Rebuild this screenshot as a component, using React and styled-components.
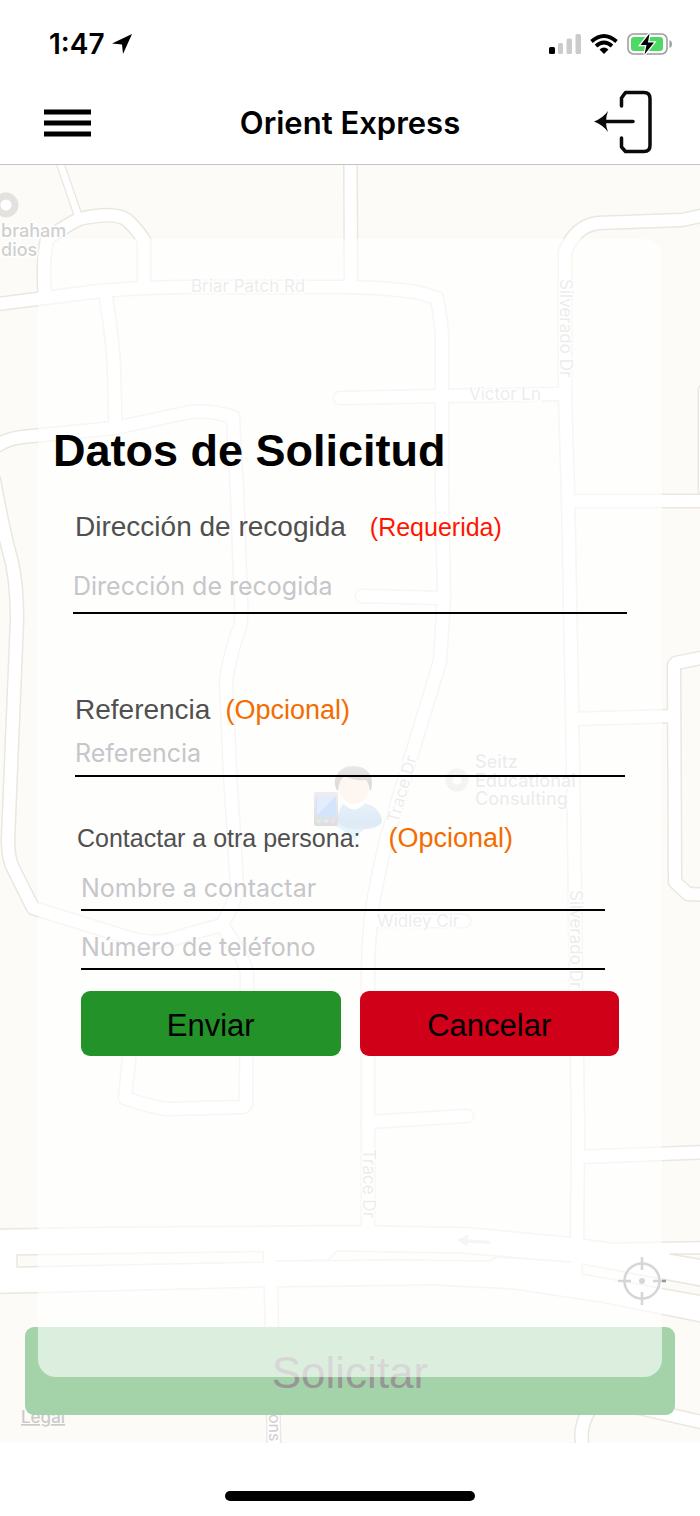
import { useState } from "react";
import styled, { createGlobalStyle } from "styled-components";


const GlobalStyle = createGlobalStyle`
    * {
        box-sizing: border-box;
    }

    body {
        margin: 0;
        background: #ffffff;
        font-family: "Liberation Sans", Arial, sans-serif;
    }
`;

const Screen = styled.div`
    display: flex;
    flex-direction: column;
    min-height: 100vh;
    background: #ffffff;
`;

const StatusBar = styled.div`
    display: flex;
    justify-content: space-between;
    align-items: center;
    height: 84px;
    padding: 4px 27px 0 49px;
`;

const Clock = styled.div`
    display: flex;
    align-items: center;
    gap: 7px;
    font-family: Inter, sans-serif;
    font-size: 28px;
    font-weight: 600;
    color: #000000;
`;

const Signals = styled.div`
    display: flex;
    align-items: center;
    gap: 9px;
`;

const NavBar = styled.header`
    display: grid;
    grid-template-columns: 1fr auto 1fr;
    align-items: center;
    height: 81px;
    padding: 0 44px 2px;
    border-bottom: 1px solid #c4c4c6;
`;

const NavTitle = styled.h1`
    margin: 0;
    font-family: Inter, sans-serif;
    font-size: 31px;
    font-weight: 600;
    line-height: 40px;
    color: #000000;
`;

const IconButton = styled.button`
    display: flex;
    justify-self: ${(props) => props.$side};
    padding: 0;
    border: none;
    background: none;
    cursor: pointer;
`;

const MapArea = styled.main`
    display: grid;
    position: relative;
    overflow: hidden;
    background: #fcfbf7;
`;

const MapDrawing = styled.svg`
    position: absolute;
    top: 0;
    left: 0;
    width: 100%;
    height: 100%;
`;

const Controls = styled.div`
    grid-area: 1 / 1;
    position: relative;
    display: flex;
    flex-direction: column;
    justify-content: flex-end;
    padding: 0 25px 28px;
`;

const LocateButton = styled(IconButton)`
    align-self: flex-end;
    margin: 0 9px 22px 0;
`;

const RequestButton = styled.button`
    height: 88px;
    padding: 4px 0 0;
    border: none;
    border-radius: 9px;
    background: #a5d3a9;
    font-family: inherit;
    font-size: 44px;
    color: #979797;
    cursor: pointer;
`;

const Card = styled.form`
    grid-area: 1 / 1;
    position: relative;
    display: flex;
    flex-direction: column;
    margin: 74px 38px 66px;
    padding: 182px 15px 321px;
    border-radius: 18px;
    background: rgba(255, 255, 255, 0.61);
    pointer-events: none;

    & input, & button, & label {
        pointer-events: auto;
    }
`;

const CardTitle = styled.h2`
    margin: 0;
    font-size: 45px;
    font-weight: bold;
    line-height: 60px;
    color: #000000;
`;

const Section = styled.section`
    display: flex;
    flex-direction: column;
    padding: 0 ${(props) => props.$right}px 0 ${(props) => props.$left}px;
    margin-top: ${(props) => props.$top}px;
`;

const LabelRow = styled.div`
    display: flex;
    align-items: center;
    gap: ${(props) => props.$gap}px;
    height: 36px;
    padding-left: ${(props) => (props.$inset ? 2 : 0)}px;
`;

const Label = styled.label`
    font-size: ${(props) => (props.$small ? 25 : 28)}px;
    color: #505050;
`;

const Note = styled.span`
    font-size: ${(props) => (props.$required ? 25 : 27)}px;
    color: ${(props) => (props.$required ? "#ff1600" : "#f26c00")};
`;

const Input = styled.input`
    width: 100%;
    height: ${(props) => props.$height}px;
    padding: ${(props) => props.$drop}px 0 0;
    border: none;
    border-bottom: 2px solid #000000;
    border-radius: 0;
    background: none;
    font-family: Inter, sans-serif;
    font-size: 25px;
    color: #222222;
    outline: none;

    &::placeholder {
        color: #c6c6cb;
        opacity: 1;
    }
`;

const Actions = styled.div`
    display: grid;
    grid-template-columns: 1fr 1fr;
    gap: 19px;
    margin: 21px 28px 0;
`;

const ActionButton = styled.button`
    height: 65px;
    padding: 4px 0 0;
    border: none;
    border-radius: 9px;
    background: ${(props) => (props.$danger ? "#d00018" : "#229229")};
    font-family: inherit;
    font-size: 31px;
    color: #000000;
    cursor: pointer;
`;

const BottomBar = styled.footer`
    display: flex;
    justify-content: center;
    padding: 48px 0 15px;
`;

const HomeIndicator = styled.div`
    width: 250px;
    height: 10px;
    border-radius: 5px;
    background: #000000;
`;


const roads = [
    "M350.5 160 L351 287",
    "M-10 305 L37 299 L100 291 Q145 287 190 287 L350 287 Q390 288 417 292 L437 298 Q441 320 442 335 L442 490 L444 598 L440 661 L410 760 L387 837 Q374 890 371 920 Q368 945 368 970 L368 1235",
    "M45 297 Q42 265 47 239 Q60 229 79 219 Q115 211 127 220 Q135 227 144 240 L144 288",
    "M105 291 Q113 340 114 370 L115.5 427",
    "M-6 448 Q5 439 22 437 L115 428 L190 412 Q210 410 233 417 L234 440 L237 490 L240.5 590 Q243 625 238 632 Q230 655 226 680 L230 773 L234 836 L237 887 Q236 900 222 925",
    "M-6 480 Q3 530 10 555 Q17 580 17 620 L8 840 Q8 860 14 870 L33 908 L133 939 Q158 946 185 935 L222 925",
    "M222 925 Q246 960 247 975 L246 1104 L243 1107 L167 1109 Q150 1107 125 1098 L131 1040 L131 1010",
    "M340 398 L442 396 L565 394",
    "M710 214 L682 220 L598 223 Q575 226 565 252 L565 394 L568 493 L572 707 L574 823 L576 987 L578 1130 L577 1245",
    "M362 596 L442 598",
    "M568 501 L710 501",
    "M572 719 L674 716",
    "M710 656 L676 663 L674 665 L675 882 L688 894 L710 895",
    "M705 390 L705 490",
    "M370 921 L464 921",
    "M368 1122 L467 1116",
    "M578 1157 L710 1152",
    "M271 1283 L274 1450",
    "M582 1450 L581.5 1433 Q584 1411 600 1399 L710 1424",
];

const Roads = () => (
    <g fill="none" strokeLinejoin="round" strokeLinecap="round">
        <g stroke="#ebe7e0" strokeWidth="15">
            {roads.map((d) => <path key={d} d={d} />)}
            <path d="M59 160 L79 218" strokeWidth="9" />
        </g>
        <path
            d="M-5 1229 L120 1227 L360 1225.5 L467 1227.5 L570 1237 L612 1243 L705 1241.5 V1323 L600 1302 L513 1289 L433 1285 L264 1287 L-5 1293.5 Z"
            fill="#ffffff"
            stroke="#ebe7e0"
            strokeWidth="1.5"
        />
        <g stroke="#ffffff" strokeWidth="12">
            {roads.map((d) => <path key={d} d={d} />)}
            <path d="M59 160 L79 218" strokeWidth="6.5" />
        </g>
        <g fill="#fcfbf7" stroke="#ebe7e0" strokeWidth="1.5">
            <path d="M17 1255 L263.5 1251.5 V1262 L17 1267 Z" />
            <path d="M276 1261 L328 1260 L337 1251 L460 1253 L570 1262 L497 1257 L489 1261 L400 1260 Z" />
            <path d="M582 1264 L710 1288 V1297 L582 1274 Z" />
            <path d="M670 1254 H710 V1261 Z" />
        </g>
    </g>
);

const MapLabels = () => (
    <g
        fontFamily="Inter, sans-serif"
        fontSize="17"
        fill="#cfcfcf"
        stroke="#ffffff"
        strokeWidth="3"
        paintOrder="stroke"
    >
        <g fontSize="18" fontWeight="500">
            <text x="1" y="237">braham</text>
            <text x="1" y="256">dios</text>
            <text x="475" y="768">Seitz</text>
            <text x="475" y="787">Educational</text>
            <text x="475" y="805">Consulting</text>
        </g>
        <text x="191" y="292">Briar Patch Rd</text>
        <text x="469" y="400">Victor Ln</text>
        <text x="377" y="927">Widley Cir</text>
        <text transform="translate(560 279) rotate(90)">Silverado Dr</text>
        <text transform="translate(570 890) rotate(90)">Silverado Dr</text>
        <text transform="translate(363 1149) rotate(90)">Trace Dr</text>
        <text transform="translate(398 824) rotate(-74)">Trace Dr</text>
        <text transform="translate(269 1414) rotate(90)" fontSize="16">ons</text>
    </g>
);

const Pin = () => (
    <g>
        <defs>
            <linearGradient id="shirt" x1="0" y1="0" x2="0" y2="1">
                <stop offset="0" stopColor="#c3dcef" />
                <stop offset="0.7" stopColor="#a9c8e6" />
                <stop offset="1" stopColor="#b8cfe6" />
            </linearGradient>
            <linearGradient id="hair" x1="0" y1="0" x2="0" y2="1">
                <stop offset="0" stopColor="#c9c3bf" />
                <stop offset="1" stopColor="#a09893" />
            </linearGradient>
            <linearGradient id="phone" x1="0" y1="0" x2="0" y2="1">
                <stop offset="0" stopColor="#d3d3d6" />
                <stop offset="1" stopColor="#a9a9b0" />
            </linearGradient>
        </defs>
        <path d="M330 824 Q345 829 355 841 Q360 830 372 824 Z" fill="#bfe6f4" />
        <path d="M337 822 Q338 806 346 803 L363 803 Q380 806 382 821 Q381 827 368 829 Q345 831 337 822 Z" fill="url(#shirt)" />
        <path d="M343 803 Q354 816 365 803 L361 798 L347 798 Z" fill="#ffffff" />
        <ellipse cx="354" cy="787" rx="15" ry="17" fill="#fbeadc" />
        <path d="M338 791 Q334 787 335 779 Q339 766 354 766 Q370 767 372 781 Q372 789 370 791 Q369 783 366 780 Q352 781 345 776 Q339 779 338 791 Z" fill="url(#hair)" />
        <rect x="314" y="792" width="24" height="34" rx="2" fill="url(#phone)" />
        <rect x="316" y="797" width="20" height="20" fill="#8db9f5" />
        <path d="M317 797 H335 L317 815 Z" fill="#b4d3fb" />
        <path d="M317 821 H321" stroke="#a7d9a7" strokeWidth="3" />
        <path d="M324 821 H328" stroke="#a7cff5" strokeWidth="3" />
        <path d="M331 821 H335" stroke="#f0aaa7" strokeWidth="3" />
    </g>
);

const Map = () => (
    <MapDrawing viewBox="0 165 700 1278" preserveAspectRatio="xMidYMin slice" aria-hidden="true">
        <Roads />
        <circle cx="6" cy="205" r="9" fill="#ffffff" stroke="#e3e2df" strokeWidth="7" />
        <circle cx="457" cy="780" r="8" fill="#ffffff" stroke="#e3e2df" strokeWidth="7" />
        <MapLabels />
        <path d="M457 1240 L469 1234 L467 1239 L490 1241 V1244 L467 1243 L468 1247 Z" fill="#e6e6e6" />
        <Pin />
        <text x="21" y="1423" fontFamily="Inter, sans-serif" fontSize="17" fontWeight="500" fill="#cbcbcb" textDecoration="underline">Legal</text>
    </MapDrawing>
);

const LocationIcon = () => (
    <svg width="20" height="20" viewBox="0 0 20 20" aria-hidden="true">
        <path d="M20 0 L11 20 L10 10.5 L0 9.5 Z" fill="#000000" />
    </svg>
);

const SignalIcon = () => (
    <svg width="32" height="20" viewBox="0 0 32 20" aria-hidden="true">
        <rect x="0" y="13" width="6" height="7" rx="1.5" fill="#000000" />
        <rect x="9" y="9" width="5" height="11" rx="1.5" fill="#cbcbcb" />
        <rect x="17.5" y="4.5" width="5.5" height="15.5" rx="1.5" fill="#cbcbcb" />
        <rect x="26.5" y="0" width="5.5" height="20" rx="1.5" fill="#cbcbcb" />
    </svg>
);

const WifiIcon = () => (
    <svg width="28" height="20" viewBox="0 0 28 20" aria-hidden="true">
        <g fill="none" stroke="#000000" strokeWidth="3.8">
            <path d="M1.5 7.5 Q14 -3.5 26.5 7.5" />
            <path d="M6 12 Q14 5 22 12" />
        </g>
        <path d="M9.5 15.5 Q14 11.5 18.5 15.5 L14 20 Z" fill="#000000" />
    </svg>
);

const BatteryIcon = () => (
    <svg width="46" height="22" viewBox="0 0 46 22" aria-hidden="true">
        <rect x="1" y="1" width="39" height="20" rx="5.5" fill="none" stroke="#9b9b9b" strokeWidth="1.5" />
        <path d="M42.5 7 Q45 8 45 11 Q45 14 42.5 15 Z" fill="#9b9b9b" />
        <rect x="4" y="4" width="32" height="14" rx="3" fill="#4cd964" />
        <path d="M22.5 0.5 L13.5 12 H19.5 L17.5 21.5 L27 9.5 H21 Z" fill="#000000" stroke="#ffffff" strokeWidth="2.5" paintOrder="stroke" />
    </svg>
);

const MenuIcon = () => (
    <svg width="47" height="28" viewBox="0 0 47 28" aria-hidden="true">
        <path d="M0 3 H47 M0 14 H47 M0 25 H47" stroke="#000000" strokeWidth="5" />
    </svg>
);

const ExitIcon = () => (
    <svg width="62" height="66" viewBox="0 0 62 66" aria-hidden="true">
        <g fill="none" stroke="#0a0a0a" strokeWidth="3.5" strokeLinecap="round">
            <path d="M27.5 16 V8 L31.5 2.5 H50 Q56 2.5 56 8.5 V55.5 Q56 61.5 50 61.5 H31.5 L27.5 57 V48" strokeLinejoin="round" />
            <path d="M8 31.5 H39" />
        </g>
        <path d="M0 31.5 Q9 28 14 21 Q10 31.5 14 42 Q9 35 0 31.5 Z" fill="#0a0a0a" />
    </svg>
);

const LocateIcon = () => (
    <svg width="48" height="48" viewBox="0 0 48 48" aria-hidden="true">
        <g fill="none" stroke="#979797" strokeWidth="2.6">
            <circle cx="24" cy="24" r="17.5" />
            <path d="M24 0 V13 M24 35 V48 M0 24 H13 M35 24 H48" />
        </g>
        <circle cx="24" cy="24" r="3" fill="#979797" />
    </svg>
);


const App = () => {

    const [form, setForm] = useState({ address: "", reference: "", name: "", phone: "" });

    const handleChange = (e) => {
        setForm({ ...form, [e.target.name]: e.target.value });
    }

    const handleSubmit = (e) => {
        e.preventDefault();
    }

    const handleCancel = () => {
        setForm({ address: "", reference: "", name: "", phone: "" });
    }

    return (
        <Screen>
            <GlobalStyle />
            <StatusBar>
                <Clock>1:47 <LocationIcon /></Clock>
                <Signals>
                    <SignalIcon />
                    <WifiIcon />
                    <BatteryIcon />
                </Signals>
            </StatusBar>
            <NavBar>
                <IconButton type="button" $side="start" aria-label="Menú"><MenuIcon /></IconButton>
                <NavTitle>Orient Express</NavTitle>
                <IconButton type="button" $side="end" aria-label="Salir"><ExitIcon /></IconButton>
            </NavBar>
            <MapArea>
                <Map />
                <Controls>
                    <LocateButton type="button" aria-label="Mi ubicación"><LocateIcon /></LocateButton>
                    <RequestButton type="button">Solicitar</RequestButton>
                </Controls>
                <Card onSubmit={handleSubmit}>
                    <CardTitle>Datos de Solicitud</CardTitle>
                    <Section $left={20} $right={20} $top={28}>
                        <LabelRow $gap={24} $inset>
                            <Label htmlFor="address">Dirección de recogida</Label>
                            <Note $required>(Requerida)</Note>
                        </LabelRow>
                        <Input id="address" name="address" $height={69} $drop={14} placeholder="Dirección de recogida" value={form.address} onChange={handleChange} />
                    </Section>
                    <Section $left={22} $right={22} $top={78}>
                        <LabelRow $gap={15}>
                            <Label htmlFor="reference">Referencia</Label>
                            <Note>(Opcional)</Note>
                        </LabelRow>
                        <Input id="reference" name="reference" $height={49} $drop={2} placeholder="Referencia" value={form.reference} onChange={handleChange} />
                    </Section>
                    <Section $left={22} $right={22} $top={43}>
                        <LabelRow $gap={28} $inset>
                            <Label htmlFor="name" $small>Contactar a otra persona:</Label>
                            <Note>(Opcional)</Note>
                        </LabelRow>
                    </Section>
                    <Section $left={28} $right={42} $top={0}>
                        <Input id="name" name="name" $height={55} $drop={10} placeholder="Nombre a contactar" value={form.name} onChange={handleChange} />
                        <Input id="phone" name="phone" type="tel" aria-label="Número de teléfono" $height={59} $drop={14} placeholder="Número de teléfono" value={form.phone} onChange={handleChange} />
                    </Section>
                    <Actions>
                        <ActionButton type="submit">Enviar</ActionButton>
                        <ActionButton type="button" $danger onClick={handleCancel}>Cancelar</ActionButton>
                    </Actions>
                </Card>
            </MapArea>
            <BottomBar>
                <HomeIndicator />
            </BottomBar>
        </Screen>
    );
}

export default App;
